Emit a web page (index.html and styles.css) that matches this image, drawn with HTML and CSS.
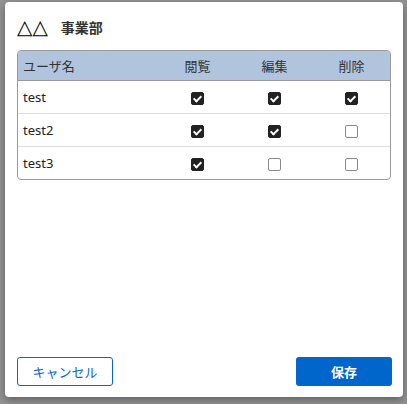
FILE: index.html
```html
<!DOCTYPE html>
<html lang="ja">
<head>
<meta charset="utf-8">
<link rel="stylesheet" href="styles.css">
</head>
<body>
<div class="dialog">
  <div class="dialog-body">
    <h2 class="title"><span class="tri">△△</span><span class="dept">事業部</span></h2>
    <div class="table-wrap">
      <table class="perm">
        <thead>
          <tr><th class="c-name">ユーザ名</th><th>閲覧</th><th>編集</th><th>削除</th></tr>
        </thead>
        <tbody>
          <tr><td class="c-name">test</td><td><span class="cb on"></span></td><td><span class="cb on"></span></td><td><span class="cb on"></span></td></tr>
          <tr><td class="c-name">test2</td><td><span class="cb on"></span></td><td><span class="cb on"></span></td><td><span class="cb"></span></td></tr>
          <tr><td class="c-name">test3</td><td><span class="cb on"></span></td><td><span class="cb"></span></td><td><span class="cb"></span></td></tr>
        </tbody>
      </table>
    </div>
  </div>
  <div class="dialog-footer">
    <button class="btn btn-outline">キャンセル</button>
    <button class="btn btn-primary">保存</button>
  </div>
</div>
</body>
</html>
```
FILE: styles.css
```css
html, body {
  margin: 0;
  padding: 0;
}
body {
  background: #939393;
  font-family: "Noto Sans", "Noto Sans CJK JP", sans-serif;
  color: #222;
  width: 407px;
  height: 404px;
  overflow: hidden;
}
.dialog {
  margin: 2px 0 0 5px;
  width: 398px;
  height: 395px;
  background: #fff;
  border-radius: 4px;
  box-shadow: 0 3px 8px rgba(0,0,0,0.35);
  display: flex;
  flex-direction: column;
  box-sizing: border-box;
}
.dialog-body {
  padding: 14px 12px 0 12px;
}
.title {
  margin: 0;
  font-size: 14px;
  font-weight: 700;
  line-height: 22px;
  height: 22px;
  color: #111;
  font-family: "Noto Sans CJK JP", sans-serif;
  display: flex;
  align-items: center;
}
.tri {
  font-family: "DejaVu Sans", sans-serif;
  font-size: 20px;
  line-height: 22px;
  font-weight: 700;
  color: #000;
  margin-right: 13px;
}
.dept {
  color: #333;
}
.table-wrap {
  margin-top: 12px;
  border: 1px solid #9a9a9a;
  border-radius: 4px;
  overflow: hidden;
}
.perm {
  width: 100%;
  border-collapse: collapse;
  font-size: 13px;
}
.perm th {
  background: #b0c4de;
  font-weight: 400;
  height: 29px;
  padding: 0;
  text-align: center;
  width: 77px;
  color: #333;
  border-bottom: 1px solid #9a9a9a;
}
.perm th.c-name, .perm td.c-name {
  text-align: left;
  padding-left: 5px;
  width: auto;
}
.perm td {
  height: 32px;
  padding: 0;
  text-align: center;
  border-top: 1px solid #dcdcdc;
  color: #222;
}
.perm tbody tr:first-child td {
  border-top: none;
}
.cb {
  display: inline-block;
  width: 13px;
  height: 13px;
  box-sizing: border-box;
  border: 1.5px solid #8a8a8a;
  border-radius: 2px;
  vertical-align: middle;
  position: relative;
  background: #fff;
}
.cb.on {
  background: #222;
  border-color: #222;
}
.cb.on::after {
  content: "";
  position: absolute;
  left: 3.2px;
  top: 0.5px;
  width: 3px;
  height: 6px;
  border: solid #fff;
  border-width: 0 2px 2px 0;
  transform: rotate(45deg);
}
.dialog-footer {
  margin-top: auto;
  padding: 0 11px 11px 12px;
  display: flex;
  justify-content: space-between;
}
.btn {
  width: 96px;
  height: 29px;
  border-radius: 3px;
  font-family: "Noto Sans CJK JP", sans-serif;
  font-size: 13px;
  cursor: pointer;
  padding: 0;
}
.btn-outline {
  background: #fff;
  color: #0a66cc;
  border: 1px solid #0a66cc;
}
.btn-primary {
  background: #0066cc;
  color: #fff;
  border: none;
  font-weight: 700;
}
```
